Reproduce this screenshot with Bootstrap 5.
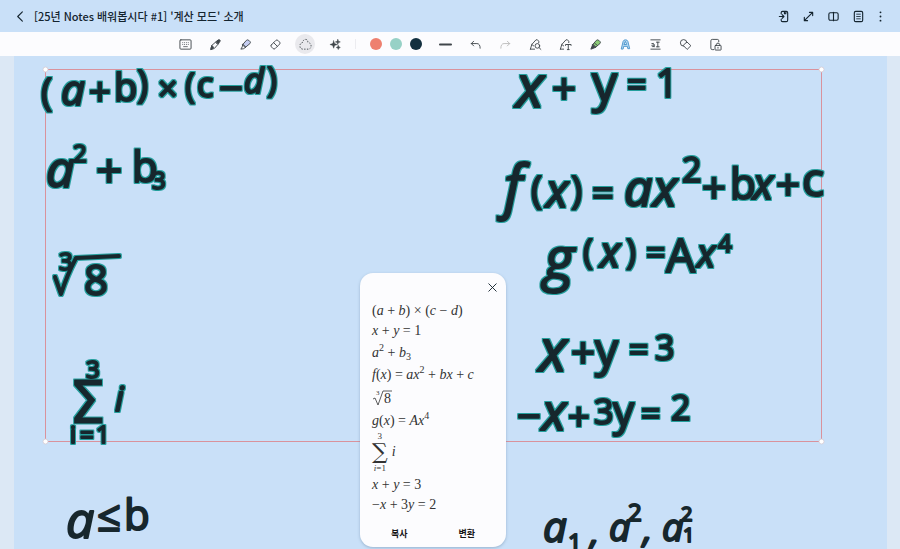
<!DOCTYPE html>
<html lang="ko">
<head>
<meta charset="utf-8">
<meta name="viewport" content="width=device-width, initial-scale=1">
<title>[25년 Notes 배워봅시다 #1] '계산 모드' 소개</title>
<link href="https://cdn.jsdelivr.net/npm/bootstrap@5.3.0/dist/css/bootstrap.min.css" rel="stylesheet">
<style>
body{background:#dce8f5;color:#14242f;font-family:"Noto Sans CJK KR",sans-serif}
.top-bar{background:#c9e0f8;height:32px;padding:0 13px 0 10px}
.doc-title{font-size:11px;font-weight:500;line-height:20px}
.tool-strip{background:#fcfcfe;height:24px;color:#40464b}
.icon-btn{width:20px;height:20px;padding:0;border:0;background:none;color:inherit;display:flex;align-items:center;justify-content:center;border-radius:50%;flex:none}
.icon-btn svg{width:13px;height:13px;fill:none;stroke:currentColor;stroke-width:1;stroke-linecap:round;stroke-linejoin:round}
.top-bar .icon-btn svg{stroke-width:1.2}
.icon-btn.dots{width:14px}
.icon-btn.picked{background:#e9e9ed}
.tool-group{gap:10px}
.swatches{gap:8px;margin:0 13px 0 14px}
.swatch{width:12px;height:12px;border:0;padding:0;border-radius:50%}
.swatch-coral{background:#ee806f}.swatch-mint{background:#97d1c6}.swatch-navy{background:#13303f}
.strip-rule{width:1px;height:10px;background:#ececf0;margin-left:10px}
.sheet{background:#c9e0f8;margin:0 13px 0 14px}
.canvas-area{min-height:0}
.ink{position:absolute;left:0;top:0;width:100%;height:auto}
.ink text{font-family:"Open Sans",sans-serif;font-weight:400;fill:#17272d;stroke:#17272d;stroke-width:2;stroke-linejoin:round}
.ink .slant{font-style:italic}
.ink .wide-sum{font-family:"DejaVu Sans",sans-serif;stroke-width:1}
.ink .radical{fill:none;stroke:#17272d;stroke-width:4;stroke-linecap:round;stroke-linejoin:round}
.ink .frame{fill:none;stroke:#d9929c;stroke-width:1}
.z20{font-size:20px}.z24{font-size:24px}.z34{font-size:34px}.z38{font-size:38px}.z42{font-size:42px}.z46{font-size:46px}.z50{font-size:50px}.z58{font-size:58px}
.result-card{position:absolute;left:40%;bottom:2px;width:146px;border-radius:13px;background:#fcfcfe;box-shadow:0 1px 3px #5878986e;padding:4px 4px 4px 12px}
.formulas{font-family:"Liberation Serif",serif;font-size:14px;line-height:20px;color:#333}
.formulas sup,.formulas sub{font-size:10px;line-height:0;font-style:normal}
.formulas sup{top:-6px}
.formulas .taller{line-height:24px}
.root svg{width:20px;height:18px;display:block}
.root text{font-family:"Liberation Serif",serif;fill:#333;stroke:none}
.sum-op{line-height:10px;margin-bottom:2px}
.sum-op .limit{font-size:9px}
.sum-op .sigma{font-size:22px;line-height:22px;font-family:"DejaVu Serif",serif}
.actions{padding:10px 27px 0 19px}
.actions button{border:0;background:none;padding:0;font-size:9px;line-height:18px;font-weight:700;color:#161616}
</style>
<script src="https://cdn.jsdelivr.net/npm/bootstrap@5.3.0/dist/js/bootstrap.bundle.min.js"></script>
</head>
<body class="d-flex flex-column vh-100 overflow-hidden">
<header class="top-bar d-flex align-items-center flex-shrink-0">
  <button class="icon-btn" aria-label="뒤로"><svg viewBox="0 0 14 14"><path d="M9 2 4 7l5 5"/></svg></button>
  <h1 class="doc-title mb-0 ms-1 me-auto text-nowrap">[25년 Notes 배워봅시다 #1] '계산 모드' 소개</h1>
  <div class="d-flex" style="gap:5px">
    <button class="icon-btn" aria-label="가져오기"><svg viewBox="0 0 14 14"><path d="M4.500 4V3q0-1.500 1.500-1.500h4q1.500 0 1.500 1.500v8q0 1.500-1.500 1.500H6q-1.500 0-1.500-1.500v-1M2.500 7h5M5.500 5l2 2-2 2M8 2v2h1.500V2"/></svg></button>
    <button class="icon-btn" aria-label="전체 화면"><svg viewBox="0 0 14 14"><path d="m2.500 11.500 9-9M8 2.500h3.500V6M6 11.500H2.500V8"/></svg></button>
    <button class="icon-btn" aria-label="두 쪽 보기"><svg viewBox="0 0 14 14"><rect x="2" y="3" width="10" height="8" rx="1.500"/><path d="M7 2.500v9"/></svg></button>
    <button class="icon-btn" aria-label="페이지"><svg viewBox="0 0 14 14"><rect x="2.500" y="1.500" width="9" height="11" rx="1.500"/><path stroke-width=".9" d="M5 4.500h4M5 7h4M5 9.500h4"/></svg></button>
    <button class="icon-btn dots" aria-label="더보기"><svg viewBox="0 0 14 14"><path style="stroke-width:2" d="M7 2.500h0M7 7h0M7 11.500h0"/></svg></button>
  </div>
</header>
<nav class="tool-strip d-flex align-items-center justify-content-center flex-shrink-0" aria-label="도구">
  <div class="tool-group d-flex">
    <button class="icon-btn" aria-label="키보드"><svg viewBox="0 0 14 14"><rect x="1" y="2" width="12" height="10" rx="1"/><path stroke-width=".8" stroke-dasharray="1 1" stroke-linecap="butt" d="M3.500 5h7M3.500 7h7"/><path stroke-width=".8" d="M5 9.300h4"/></svg></button>
    <button class="icon-btn" aria-label="펜"><svg viewBox="0 0 14 14"><path d="m2 12 1-4 4-3.500 2.500 2.500L6 11z"/><path fill="currentColor" d="M7.500 4 10 2q1.500-.5 2 .5t-.5 1.500L10 6.500zM2 12l1-4 2 2-1 1.500z"/></svg></button>
    <button class="icon-btn" aria-label="형광펜"><svg viewBox="0 0 14 14"><path fill="#c5cdf0" d="m4 7 4-4.500q1-1 2.500 0l1.500 1.500q.8 1-.2 2L7 10z"/><path d="m4 7-.5 2.500L2 12l3-.5L7 10z"/></svg></button>
    <button class="icon-btn" aria-label="지우개"><svg viewBox="0 0 14 14"><path d="m2.500 7.500 5-5q1-.8 2 0l2 2q.8 1 0 2l-5 5q-1 .8-2 0l-2-2q-.8-1 0-2zM5 5l4 4"/></svg></button>
    <button class="icon-btn picked" aria-label="올가미"><svg viewBox="0 0 14 14"><path stroke-linecap="butt" stroke-dasharray="1.500 1.500" style="stroke-linecap:butt" d="M7 1.500q2.500 0 2.500 3 3.500 1 3.500 4t-3 3.500H4Q1 11.500 1 8.500t3.500-4q0-3 2.500-3z"/></svg></button>
    <button class="icon-btn" aria-label="AI 도우미"><svg viewBox="0 0 14 14"><path stroke-width=".5" style="stroke-width:.5" fill="currentColor" d="m5 3 1 3 3 1-3 1-1 3-1-3-3-1 3-1zM9.500 1.500l.7 2 2 .7-2 .7-.7 2-.7-2-2-.7 2-.7zM10 8l.7 1.500 1.500.7-1.500.7L10 12.500l-.7-1.600-1.500-.7 1.500-.7z"/></svg></button>
  </div>
  <span class="strip-rule"></span>
  <div class="swatches d-flex">
    <button class="swatch swatch-coral" aria-label="산호색"></button>
    <button class="swatch swatch-mint" aria-label="민트색"></button>
    <button class="swatch swatch-navy" aria-label="남색"></button>
  </div>
  <div class="tool-group d-flex">
    <button class="icon-btn" aria-label="선 두께"><svg viewBox="0 0 14 14"><path style="stroke-width:2" d="M1 7h12"/></svg></button>
    <button class="icon-btn" aria-label="실행 취소"><svg viewBox="0 0 14 14"><path d="M5 3.500 2.500 6 5 8.500M2.500 6h6Q12 6 12 11"/></svg></button>
    <button class="icon-btn" aria-label="다시 실행" style="color:#bbb"><svg viewBox="0 0 14 14"><path d="M9 3.500 11.500 6 9 8.500M11.500 6h-6Q2 6 2 11"/></svg></button>
    <button class="icon-btn" aria-label="필기 검색"><svg viewBox="0 0 14 14"><path d="M1.500 12 3 7l4.500-5q1.500-1 3 1.500V5M1.500 12H6M3 7l2 1.500"/><circle cx="9" cy="8.500" r="2.500"/><path d="m11 10.500 1.800 1.800"/></svg></button>
    <button class="icon-btn" aria-label="텍스트 변환"><svg viewBox="0 0 14 14"><path d="M1.500 12 3 7l4.500-5q1.500-1 3 1.500V5M1.500 12H5M3 7l2 1.500M7 8V7h6v1M10 7v5.500M9 12.500h2"/></svg></button>
    <button class="icon-btn" aria-label="서식 펜"><svg viewBox="0 0 14 14"><path fill="#8ccb76" d="m4 7 4-4.500q1-1 2.500 0l1.500 1.500q.8 1-.2 2L7 10z"/><path fill="currentColor" d="m4 7-1 2.500L2 12l3-1 2-1z"/><path d="M6 5.500 9 8"/></svg></button>
    <button class="icon-btn" aria-label="글꼴 정리" style="color:#4b94cb"><svg viewBox="0 0 14 14"><path fill="#b8dcf4" d="m2.500 11.500 2-8Q5 2 7 2t2.500 1.500l2 8h-2L9 9H5l-.5 2.500zM5.700 7h2.600L7 4z"/></svg></button>
    <button class="icon-btn" aria-label="줄 맞춤"><svg viewBox="0 0 14 14"><path d="M2 2h10M2 12h10M3 6q2.500-1 2.500 1v2.500M5.500 7.500Q3 7 3 8.500t2.500.5M8 4.500h3M9.500 4.500v5M8 9.500h3"/></svg></button>
    <button class="icon-btn" aria-label="도형"><svg viewBox="0 0 14 14"><circle cx="5" cy="5.200" r="3.500"/><path fill="#fcfcfe" d="m8.800 4.500 4 3.800-4 4-4-4z"/></svg></button>
    <button class="icon-btn" aria-label="읽기 잠금"><svg viewBox="0 0 14 14"><path d="M5 12.500H3.500q-1.500 0-1.500-1.500V3q0-1.500 1.500-1.500H9q1.500 0 1.500 1.500v1"/><rect x="6.500" y="8" width="6.500" height="5" rx=".5"/><path d="M8 8V7q0-1.500 1.700-1.500T11.500 7v1M9.700 10v1"/></svg></button>
  </div>
</nav>
<main class="canvas-area position-relative flex-grow-1 overflow-hidden">
  <div class="sheet h-100"></div>
  <svg class="ink" viewBox="0 56 900 493">
    <defs>
      <filter id="glow" x="0" y="56" width="900" height="493" filterUnits="userSpaceOnUse" color-interpolation-filters="sRGB">
        <feMorphology in="SourceAlpha" operator="dilate" radius="1" result="wide"/>
        <feFlood flood-color="#249f9d"/><feComposite in2="wide" operator="in" result="halo"/>
        <feMerge><feMergeNode in="halo"/><feMergeNode in="SourceGraphic"/></feMerge>
      </filter>
    </defs>
    <rect class="frame" x="45.500" y="69.500" width="776" height="372"/>
    <g filter="url(#glow)">
      <text><tspan class="z38" x="41" y="106">(</tspan><tspan class="z42 slant" x="61" y="105">a</tspan><tspan class="z38" x="89 114 137" y="105 101 98">+b)</tspan><tspan class="z34" x="158" y="101">×</tspan><tspan class="z34" x="185 197" y="98 97">(c</tspan><tspan class="z42" x="219" y="103">−</tspan><tspan class="z34 slant" x="244" y="93">d</tspan><tspan class="z34" x="267" y="92">)</tspan></text>
      <text><tspan class="z50 slant" x="46" y="187">a</tspan><tspan class="z24" x="73" y="162">2</tspan><tspan class="z46" x="96" y="187">+</tspan><tspan class="z42" x="132" y="182">b</tspan><tspan class="z24" x="152" y="189">3</tspan></text>
      <path class="radical" d="m55 277 6 17q6-19 15-36l43-2"/>
      <text><tspan class="z24" x="59" y="270">3</tspan><tspan class="z42" x="84" y="295">8</tspan></text>
      <text><tspan class="z24" x="86" y="378">3</tspan><tspan class="z58 wide-sum" x="69" y="423">Σ</tspan><tspan class="z34 slant" x="115" y="411">i</tspan><tspan class="z24" x="70 80 96" y="443">i=1</tspan></text>
      <text><tspan class="z58 slant" x="516" y="107">x</tspan><tspan class="z42" x="552" y="104">+</tspan><tspan class="z50" x="592" y="101">y</tspan><tspan class="z34" x="627" y="97">=</tspan><tspan class="z38" x="656" y="97">1</tspan></text>
      <text><tspan class="z58 slant" x="504" y="207">f</tspan><tspan class="z38" x="531" y="204">(</tspan><tspan class="z46 slant" x="546" y="207">x</tspan><tspan class="z38" x="571" y="204">)</tspan><tspan class="z38" x="592" y="206">=</tspan><tspan class="z50 slant" x="624" y="206">a</tspan><tspan class="z50 slant" x="653" y="206">x</tspan><tspan class="z34" x="682" y="182">2</tspan><tspan class="z42" x="702" y="203">+</tspan><tspan class="z42" x="730" y="199">b</tspan><tspan class="z42 slant" x="753" y="199">x</tspan><tspan class="z42" x="776" y="200">+</tspan><tspan class="z46" x="802" y="196">c</tspan></text>
      <text><tspan class="z58 slant" x="544" y="279">g</tspan><tspan class="z34" x="583" y="264">(</tspan><tspan class="z42 slant" x="600" y="267">x</tspan><tspan class="z34" x="626" y="264">)</tspan><tspan class="z34" x="646" y="265">=</tspan><tspan class="z46" x="666" y="272">A</tspan><tspan class="z38 slant" x="697" y="267">x</tspan><tspan class="z24" x="718" y="252">4</tspan></text>
      <text><tspan class="z58 slant" x="539" y="371">x</tspan><tspan class="z42" x="571" y="368">+</tspan><tspan class="z46" x="595" y="366">y</tspan><tspan class="z34" x="629" y="362">=</tspan><tspan class="z34" x="655" y="360">3</tspan></text>
      <text><tspan class="z42" x="517" y="431">−</tspan><tspan class="z50 slant" x="542" y="430">x</tspan><tspan class="z38" x="568" y="430">+</tspan><tspan class="z34" x="594" y="424">3</tspan><tspan class="z42" x="613" y="426">y</tspan><tspan class="z34" x="641" y="426">=</tspan><tspan class="z34" x="671" y="420">2</tspan></text>
    </g>
    <text><tspan class="z50 slant" x="66" y="538">a</tspan><tspan class="z42" x="97" y="531">≤</tspan><tspan class="z42" x="124" y="530">b</tspan></text>
    <text><tspan class="z42 slant" x="543" y="542">a</tspan><tspan class="z24" x="568" y="551">1</tspan><tspan class="z38 slant" x="590" y="545">,</tspan><tspan class="z38 slant" x="609" y="541">a</tspan><tspan class="z24" x="628" y="521">2</tspan><tspan class="z38 slant" x="643" y="542">,</tspan><tspan class="z38 slant" x="662" y="541">a</tspan><tspan class="z20" x="681" y="521">2</tspan><tspan class="z20" x="683" y="542">1</tspan></text>
    <g fill="#fff" stroke="#d3c9d2" stroke-width=".8"><circle cx="45.500" cy="69.500" r="2.500"/><circle cx="821.500" cy="69.500" r="2.500"/><circle cx="45.500" cy="441.500" r="2.500"/><circle cx="821.500" cy="441.500" r="2.500"/></g>
  </svg>
  <section class="result-card" aria-label="변환 결과">
    <div class="d-flex justify-content-end mb-1"><button class="icon-btn" aria-label="닫기"><svg viewBox="0 0 14 14"><path d="m3 3 8 8m0-8-8 8"/></svg></button></div>
    <div class="formulas text-nowrap">
      <div>(<i>a</i> + <i>b</i>) × (<i>c</i> − <i>d</i>)</div>
      <div><i>x</i> + <i>y</i> = 1</div>
      <div class="taller"><i>a</i><sup>2</sup> + <i>b</i><sub>3</sub></div>
      <div><i>f</i>(<i>x</i>) = <i>ax</i><sup>2</sup> + <i>bx</i> + <i>c</i></div>
      <div class="root py-1"><svg viewBox="0 0 20 18" role="img" aria-label="세제곱근 8"><path d="m1 10 2-1 3 7 5-14h9" fill="none" stroke="#333" stroke-width=".8"/><text x="4" y="6" font-size="7">3</text><text x="12" y="14" font-size="14">8</text></svg></div>
      <div><i>g</i>(<i>x</i>) = <i>Ax</i><sup>4</sup></div>
      <div class="sum-op d-flex align-items-center"><div class="d-flex flex-column align-items-center"><span class="limit">3</span><span class="sigma">∑</span><span class="limit"><i>i</i>=1</span></div><i class="ms-1">i</i></div>
      <div><i>x</i> + <i>y</i> = 3</div>
      <div>−<i>x</i> + 3<i>y</i> = 2</div>
    </div>
    <div class="actions d-flex justify-content-between"><button>복사</button><button>변환</button></div>
  </section>
</main>
</body>
</html>
